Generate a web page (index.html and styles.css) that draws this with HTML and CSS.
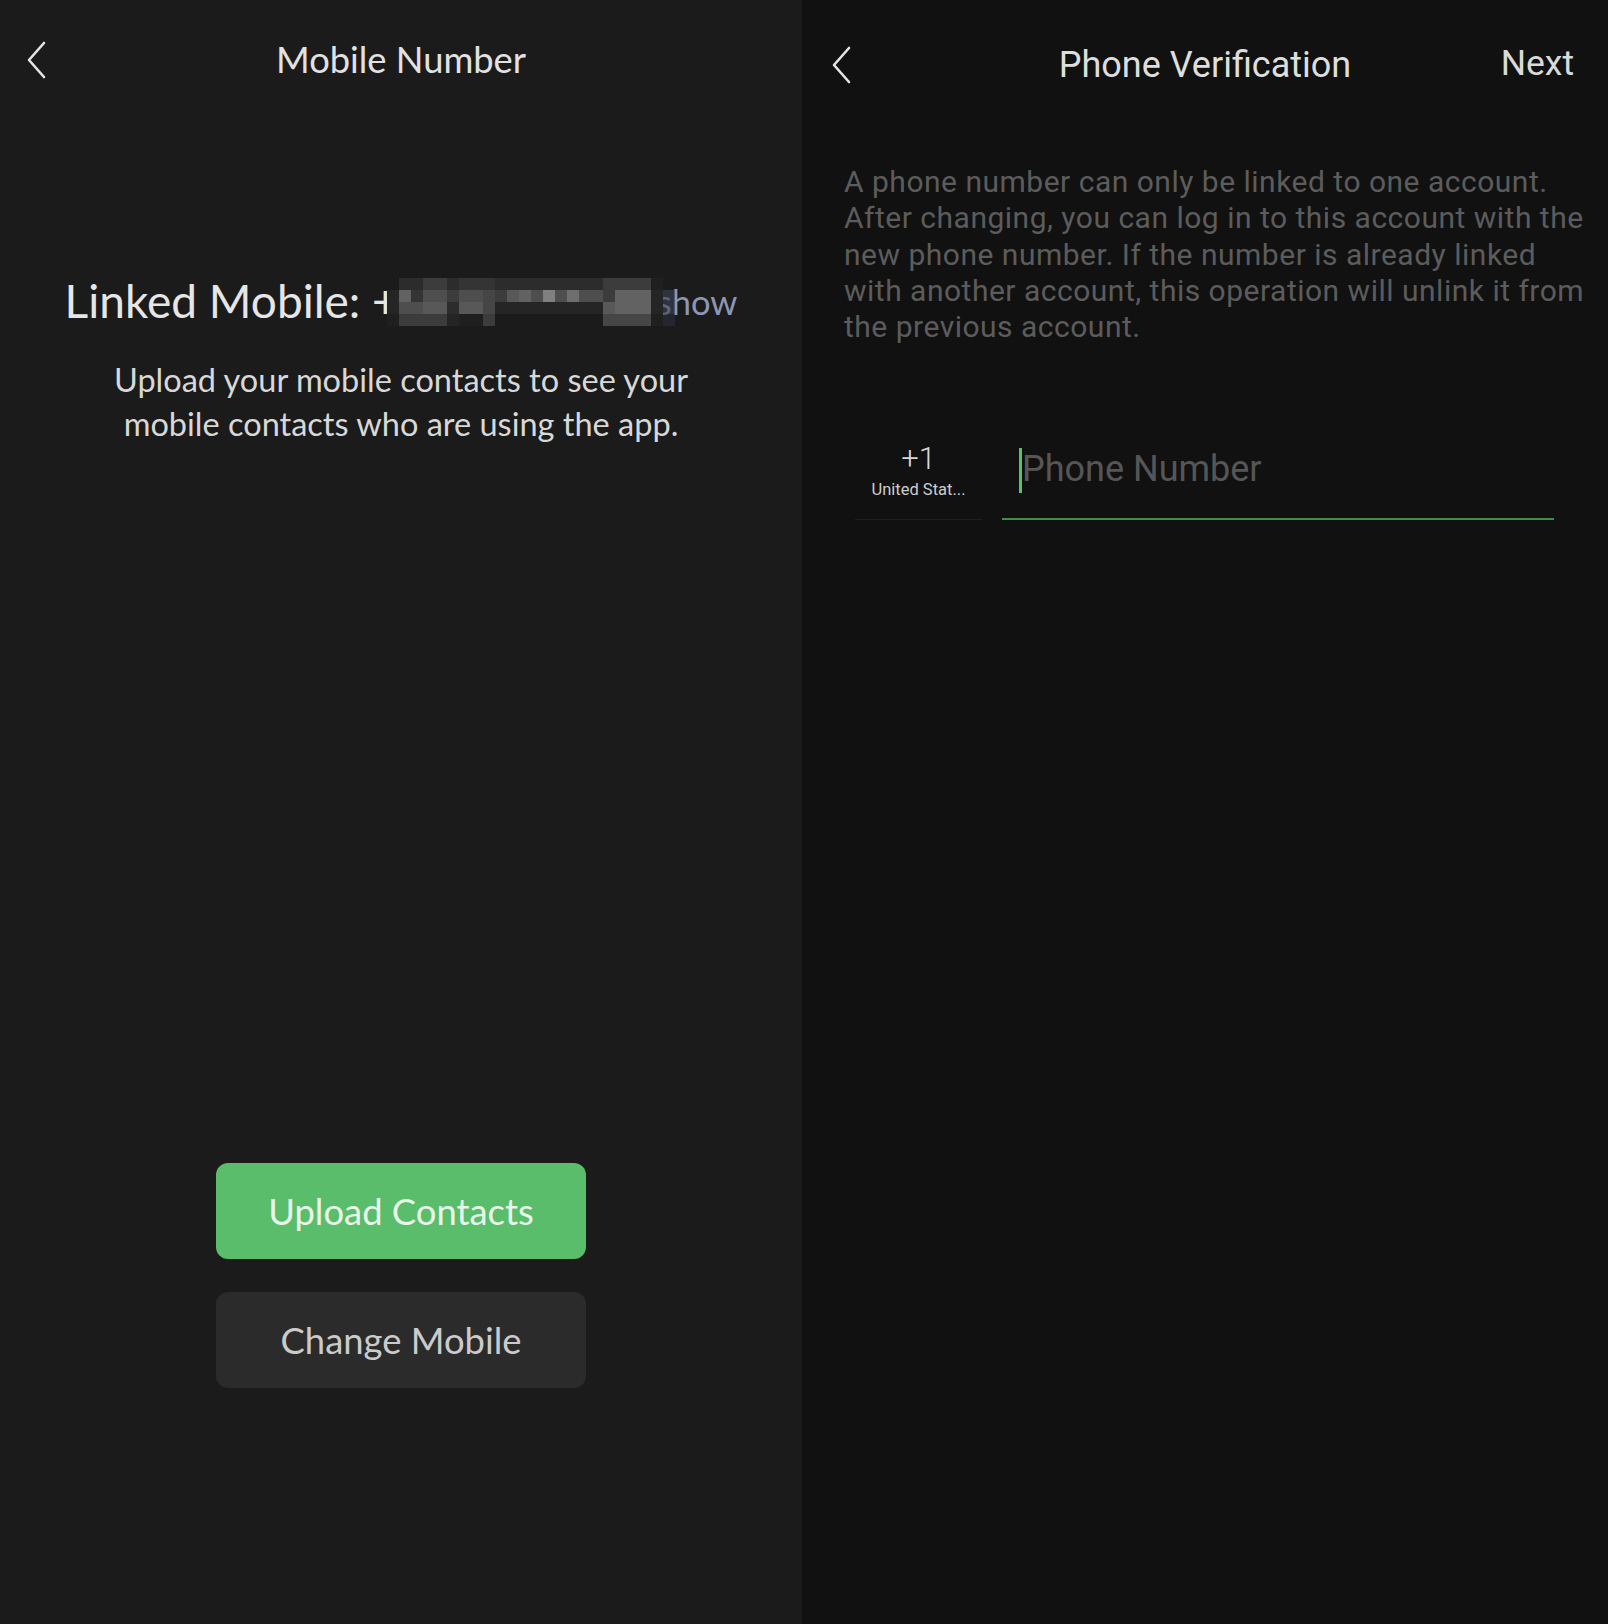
FILE: index.html
```html
<!DOCTYPE html>
<html>
<head>
<meta charset="utf-8">
<link rel="stylesheet" href="styles.css">
</head>
<body>
<div class="screen">
  <section class="pane pane-left">
    <header class="bar">
      <svg class="back" width="22" height="38" viewBox="0 0 22 38"><path d="M18 2 L3 19 L18 36" fill="none" stroke="#e4e4e4" stroke-width="2.6" stroke-linecap="round" stroke-linejoin="round"/></svg>
      <h1 class="title title-left">Mobile Number</h1>
    </header>
    <div class="linked">
      <span class="linked-label">Linked Mobile: +</span>
      <span class="mosaic">
        <i class="g0"></i><i class="g3"></i><i class="g3"></i><i class="g5"></i><i class="g5"></i><i class="g3"></i><i class="g4"></i><i class="g4"></i><i class="g4"></i><i class="g3"></i><i class="g3"></i><i class="g3"></i><i class="g3"></i><i class="g3"></i><i class="g3"></i><i class="g3"></i><i class="g3"></i><i class="g3"></i><i class="g5"></i><i class="g5"></i><i class="g5"></i><i class="g5"></i><i class="g1"></i><i class="g0"></i>
        <i class="g2"></i><i class="g9"></i><i class="g4"></i><i class="g7"></i><i class="g7"></i><i class="g5"></i><i class="g7"></i><i class="g7"></i><i class="g6"></i><i class="g5"></i><i class="g8"></i><i class="g9"></i><i class="g7"></i><i class="g11"></i><i class="g7"></i><i class="g10"></i><i class="g7"></i><i class="g7"></i><i class="g5"></i><i class="g9"></i><i class="g9"></i><i class="g9"></i><i class="g2"></i><i class="gb1"></i>
        <i class="g2"></i><i class="g7"></i><i class="g7"></i><i class="g8"></i><i class="g8"></i><i class="g3"></i><i class="g8"></i><i class="g8"></i><i class="g6"></i><i class="g2"></i><i class="g2"></i><i class="g2"></i><i class="g2"></i><i class="g2"></i><i class="g2"></i><i class="g2"></i><i class="g2"></i><i class="g2"></i><i class="g8"></i><i class="g9"></i><i class="g9"></i><i class="g9"></i><i class="g2"></i><i class="gb1"></i>
        <i class="g1"></i><i class="g5"></i><i class="g5"></i><i class="g5"></i><i class="g5"></i><i class="g2"></i><i class="g1"></i><i class="g1"></i><i class="g5"></i><i class="g0"></i><i class="g0"></i><i class="g0"></i><i class="g0"></i><i class="g0"></i><i class="g0"></i><i class="g0"></i><i class="g0"></i><i class="g0"></i><i class="g6"></i><i class="g6"></i><i class="g6"></i><i class="g6"></i><i class="g1"></i><i class="gb2"></i>
      </span>
      <span class="show">show</span>
    </div>
    <p class="hint">Upload your mobile contacts to see your<br>mobile contacts who are using the app.</p>
    <div class="actions">
      <button class="btn btn-primary">Upload Contacts</button>
      <button class="btn btn-secondary">Change Mobile</button>
    </div>
  </section>
  <section class="pane pane-right">
    <header class="bar bar-right">
      <svg class="back" width="22" height="38" viewBox="0 0 22 38"><path d="M18 2 L3 19 L18 36" fill="none" stroke="#e4e4e4" stroke-width="2.6" stroke-linecap="round" stroke-linejoin="round"/></svg>
      <h1 class="title title-right">Phone Verification</h1>
      <span class="next">Next</span>
    </header>
    <p class="notice">A phone number can only be linked to one account.<br>After changing, you can log in to this account with the<br>new phone number. If the number is already linked<br>with another account, this operation will unlink it from<br>the previous account.</p>
    <div class="phone-row">
      <div class="country">
        <span class="code">+1</span>
        <span class="cname">United Stat...</span>
      </div>
      <div class="phone-input">
        <span class="caret"></span>
        <span class="placeholder">Phone Number</span>
      </div>
    </div>
  </section>
</div>
</body>
</html>
```

FILE: styles.css
```css
html, body {
  margin: 0;
  padding: 0;
}
body {
  width: 1608px;
  height: 1624px;
  overflow: hidden;
  background: #111111;
  font-family: Roboto, "Liberation Sans", sans-serif;
}
.screen {
  display: flex;
  width: 1608px;
  height: 1624px;
}
.pane {
  display: flex;
  flex-direction: column;
  height: 100%;
  box-sizing: border-box;
}
.pane-left {
  width: 802px;
  background: #1b1b1b;
}
.pane-right {
  width: 806px;
  background: #111111;
}
.bar {
  position: relative;
  height: 120px;
  display: flex;
  align-items: center;
  justify-content: center;
}
.back {
  position: absolute;
  left: 26px;
  top: 41px;
}
.bar-right .back {
  left: 29px;
  top: 46px;
}
.title {
  margin: 0;
  font-weight: 400;
  color: #e2e2e2;
}
.title-left {
  font-size: 36.3px;
  transform: translateY(-1px);
  font-family: Lato, Roboto, sans-serif;
}
.title-right {
  font-size: 36px;
  color: #dedede;
  transform: translateY(5px);
}
.next {
  position: absolute;
  right: 34px;
  top: 42px;
  font-size: 35.5px;
  color: #dadada;
}

.linked {
  display: flex;
  align-items: center;
  justify-content: center;
  margin-top: 152px;
  height: 56px;
  font-family: Lato, Roboto, sans-serif;
}
.linked-label {
  font-size: 46px;
  color: #e6e6e6;
}
.mosaic {
  position: relative;
  z-index: 1;
  display: grid;
  grid-template-columns: repeat(24, 12px);
  grid-template-rows: repeat(4, 12px);
  margin-left: -12px;
  margin-right: -18px;
  margin-top: 4px;
  filter: blur(0.5px);
}
.mosaic i {
  display: block;
}
.g0 { background: transparent; }
.g1 { background: #1f1f1f; }
.g2 { background: #252525; }
.g3 { background: #2c2c2c; }
.g4 { background: #343434; }
.g5 { background: #3c3c3c; }
.g6 { background: #464646; }
.g7 { background: #4e4e4e; }
.g8 { background: #585858; }
.g9 { background: #626262; }
.g10 { background: #6e6e6e; }
.g11 { background: #808080; }
.gb1 { background: rgba(62, 68, 88, 0.6); }
.gb2 { background: rgba(45, 49, 64, 0.6); }
.show {
  font-size: 34.5px;
  color: #8c97b4;
  margin-top: 2px;
}
.hint {
  margin: 30px 0 0;
  text-align: center;
  font-family: Lato, Roboto, sans-serif;
  font-size: 32.5px;
  line-height: 43.5px;
  color: #d8d8d8;
}
.actions {
  margin-top: auto;
  margin-bottom: 236px;
  display: flex;
  flex-direction: column;
  align-items: center;
  gap: 33px;
}
.btn {
  width: 370px;
  height: 96px;
  border: 0;
  border-radius: 12px;
  font-family: Lato, Roboto, sans-serif;
  font-size: 36.4px;
  padding: 0;
}
.btn-primary {
  background: #5abd6b;
  color: #e9f6ea;
}
.btn-secondary {
  background: #2b2b2b;
  color: #cbcbcb;
}

.notice {
  margin: 44px 0 0 42px;
  font-size: 30px;
  letter-spacing: 0.5px;
  line-height: 36.3px;
  color: #5c5c5c;
  white-space: nowrap;
}
.phone-row {
  display: flex;
  align-items: flex-end;
  margin-top: 89px;
  padding-left: 53px;
}
.country {
  width: 127px;
  height: 84px;
  box-sizing: border-box;
  border-bottom: 1px solid #1f1f1f;
  display: flex;
  flex-direction: column;
  align-items: center;
  padding-top: 5px;
}
.code {
  font-size: 31px;
  line-height: 36px;
  font-weight: 300;
  color: #d8d8d8;
}
.cname {
  font-size: 16.5px;
  line-height: 22px;
  margin-top: 2px;
  color: #cdcdcd;
}
.phone-input {
  margin-left: 20px;
  width: 552px;
  height: 86px;
  box-sizing: border-box;
  border-bottom: 2px solid #3e8f4a;
  display: flex;
  align-items: flex-start;
  padding-top: 12px;
  padding-left: 17px;
}
.caret {
  width: 3px;
  height: 45px;
  background: #5ac26a;
  margin-top: 2px;
}
.placeholder {
  font-size: 36px;
  line-height: 46px;
  color: #565656;
}
```
